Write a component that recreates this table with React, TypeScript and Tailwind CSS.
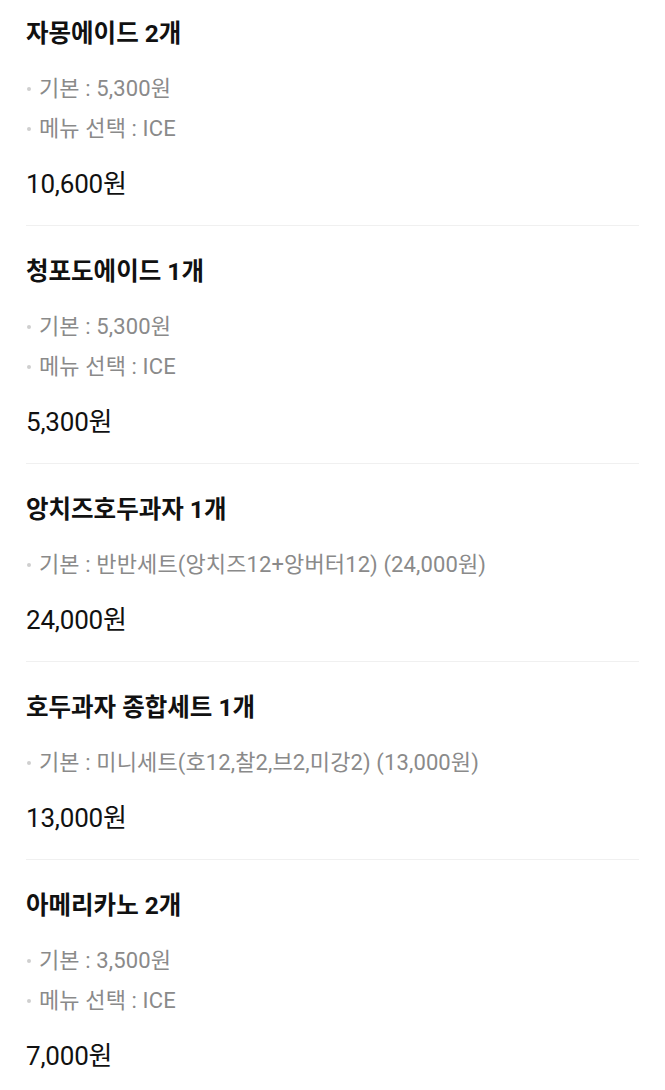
import React from "react";

type Item = { title: string; options: string[]; price: string };

const items: Item[] = [
  { title: "자몽에이드 2개", options: ["기본 : 5,300원", "메뉴 선택 : ICE"], price: "10,600원" },
  { title: "청포도에이드 1개", options: ["기본 : 5,300원", "메뉴 선택 : ICE"], price: "5,300원" },
  { title: "앙치즈호두과자 1개", options: ["기본 : 반반세트(앙치즈12+앙버터12) (24,000원)"], price: "24,000원" },
  { title: "호두과자 종합세트 1개", options: ["기본 : 미니세트(호12,찰2,브2,미강2) (13,000원)"], price: "13,000원" },
  { title: "아메리카노 2개", options: ["기본 : 3,500원", "메뉴 선택 : ICE"], price: "7,000원" },
];

export default function App() {
  return (
    <div
      className="w-[665px] bg-white px-[26px] pb-4"
      style={{ fontFamily: 'Roboto, "Noto Sans CJK KR", "Noto Sans", sans-serif' }}
    >
      {items.map((it, i) => (
        <div
          key={i}
          className={`${i === 0 ? "pt-[18px]" : "pt-[30px]"} ${i < items.length - 1 ? "border-b border-[#f0f0f0] pb-[25px]" : "pb-4"}`}
        >
          <div className="text-[24.5px] font-bold leading-8 tracking-[0px] text-[#111]">{it.title}</div>
          <div className="mt-[19px] flex flex-col">
            {it.options.map((o, j) => (
              <div key={j} className="flex items-center leading-[40px] h-[40px]">
                <span className="ml-[1px] mr-[8px] h-[4px] w-[4px] rounded-full bg-[#cfcfcf]" />
                <span className="text-[22px] tracking-[0.12px] text-[#8a8a8a]">{o}</span>
              </div>
            ))}
          </div>
          <div className="mt-[19px] text-[26px] leading-8 tracking-[-0.2px] text-[#111]">{it.price}</div>
        </div>
      ))}
    </div>
  );
}
